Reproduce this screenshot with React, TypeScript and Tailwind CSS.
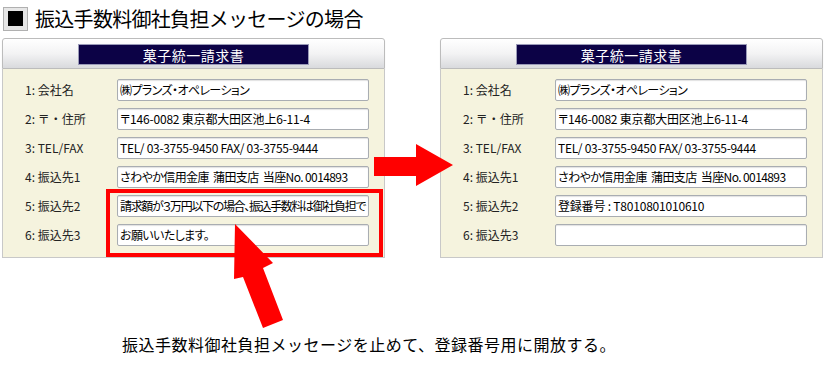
import React from "react";

const jp = "font-['Noto_Sans_CJK_JP','Noto_Sans',sans-serif]";

type Row = { label: string; value: string; tight?: string };

const leftRows: Row[] = [
  { label: "1: 会社名", value: "㈱プランズ・オペレーション", tight: "tracking-[-0.6px]" },
  { label: "2: 〒・住所", value: "〒146-0082 東京都大田区池上6-11-4", tight: "tracking-[-0.2px]" },
  { label: "3: TEL/FAX", value: "TEL/ 03-3755-9450 FAX/ 03-3755-9444", tight: "tracking-[-0.3px]" },
  { label: "4: 振込先1", value: "さわやか信用金庫  蒲田支店  当座No. 0014893", tight: "tracking-[-0.6px]" },
  { label: "5: 振込先2", value: "請求額が３万円以下の場合、振込手数料は御社負担で", tight: "tracking-[-1.35px]" },
  { label: "6: 振込先3", value: "お願いいたします。", tight: "tracking-[-0.6px]" },
];

const rightRows: Row[] = [
  { label: "1: 会社名", value: "㈱プランズ・オペレーション", tight: "tracking-[-0.6px]" },
  { label: "2: 〒・住所", value: "〒146-0082 東京都大田区池上6-11-4", tight: "tracking-[-0.2px]" },
  { label: "3: TEL/FAX", value: "TEL/ 03-3755-9450 FAX/ 03-3755-9444", tight: "tracking-[-0.3px]" },
  { label: "4: 振込先1", value: "さわやか信用金庫  蒲田支店  当座No. 0014893", tight: "tracking-[-0.6px]" },
  { label: "5: 振込先2", value: "登録番号 : T8010801010610", tight: "tracking-[-0.2px]" },
  { label: "6: 振込先3", value: "" },
];

function Panel({ rows }: { rows: Row[] }) {
  return (
    <div className="w-[383px] flex flex-col">
      <div className="h-[31px] border border-[#bcbcbc] rounded-t-[3px] bg-gradient-to-b from-[#ffffff] via-[#f3f3f4] to-[#d9dadd] flex justify-center shadow-[0_1px_1px_rgba(0,0,0,0.15)]">
        <div className="mt-[5px] w-[231px] h-[21px] bg-[#0c0246] border border-[#9a9ab8] flex items-center justify-center text-white text-[14px] leading-none tracking-[0.5px]">
          菓子統一請求書
        </div>
      </div>
      <div className="h-[189px] bg-[#f5f3de] border border-t-0 border-[#c8c8c8] pt-[10px] flex flex-col gap-[7px]">
        {rows.map((r, i) => (
          <div key={i} className="flex items-center h-[22px]">
            <div className="w-[114px] pl-[22px] text-[12px] text-[#222] leading-none whitespace-nowrap">
              {r.label}
            </div>
            <div className="w-[252px] h-[22px] bg-white border border-[#a9adb2] rounded-[2px] shadow-[inset_0_1px_1px_rgba(0,0,0,0.12)] flex items-center px-[2px] overflow-hidden">
              <span className={`text-[12px] leading-none text-black whitespace-pre [font-feature-settings:'palt'] ${r.tight ?? ""}`}>
                {r.value}
              </span>
            </div>
          </div>
        ))}
      </div>
    </div>
  );
}

export default function App() {
  return (
    <div className={`relative w-[827px] h-[367px] bg-white overflow-hidden ${jp}`}>
      <div className="flex items-center h-[36px] pl-[3px] pt-[1px] gap-[7px]">
        <div className="w-[25px] h-[24px] bg-[#e6e6e6] border border-[#b0b0b0] flex items-center justify-center">
          <div className="w-[15px] h-[15px] bg-black" />
        </div>
        <div className="text-[20px] leading-none text-black tracking-[-0.7px]">振込手数料御社負担メッセージの場合</div>
      </div>
      <div className="flex mt-[2px] pl-[2px] gap-[55px]">
        <Panel rows={leftRows} />
        <Panel rows={rightRows} />
      </div>
      <div className="pl-[122px] mt-[78px] text-[16px] leading-none text-black tracking-[0.5px]">
        振込手数料御社負担メッセージを止めて、登録番号用に開放する。
      </div>

      <div className="absolute left-[106px] top-[189px] w-[277px] h-[68px] border-[4px] border-[#ff0000]" />

      <svg className="absolute left-0 top-0 pointer-events-none" width="827" height="367" viewBox="0 0 827 367">
        <polygon
          points="374,157 416,157 416,144 453,165 416,186 416,176 374,176"
          fill="#ff0000"
        />
        <polygon
          points="235,224 273,263 263,268 283,320 263,328 243,277 234,279"
          fill="#ff0000"
        />
      </svg>
    </div>
  );
}
